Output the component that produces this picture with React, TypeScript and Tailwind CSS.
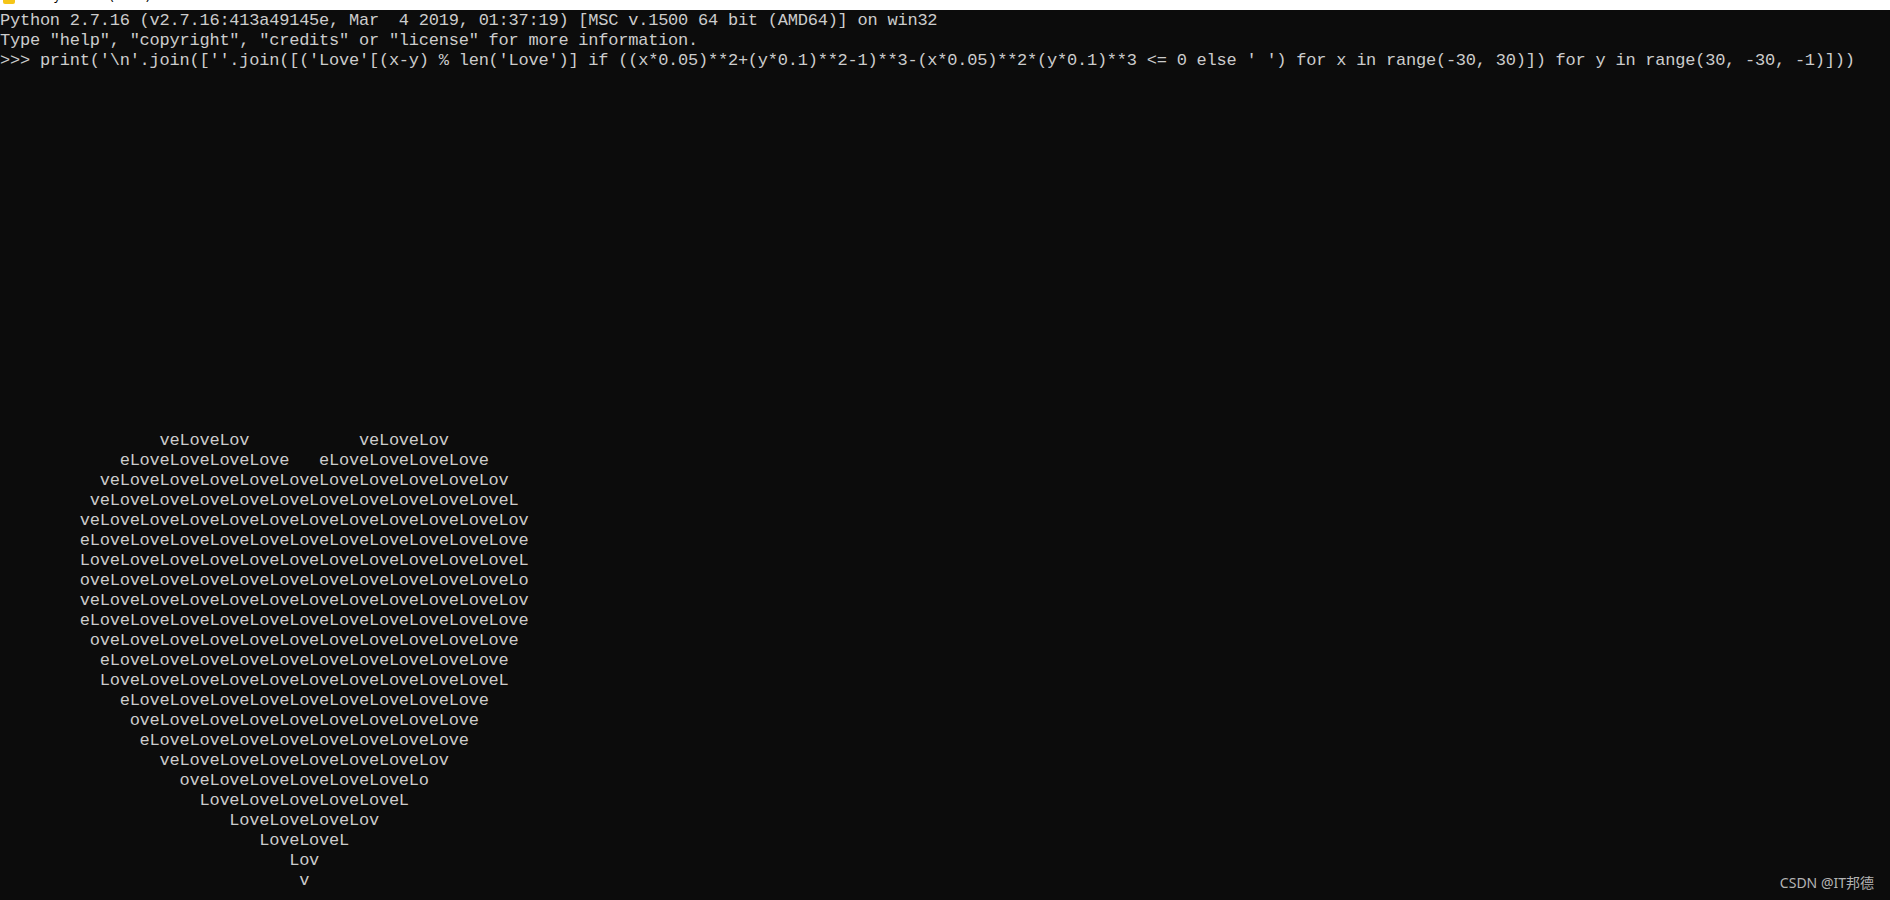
const header = [
  "Python 2.7.16 (v2.7.16:413a49145e, Mar  4 2019, 01:37:19) [MSC v.1500 64 bit (AMD64)] on win32",
  'Type "help", "copyright", "credits" or "license" for more information.',
  ">>> print('\\n'.join([''.join([('Love'[(x-y) % len('Love')] if ((x*0.05)**2+(y*0.1)**2-1)**3-(x*0.05)**2*(y*0.1)**3 <= 0 else ' ') for x in range(-30, 30)]) for y in range(30, -30, -1)]))",
];

// same loop as the python one-liner
function heartLines() {
  const word = "Love";
  const out: string[] = [];
  for (let y = 30; y > -30; y--) {
    let row = "";
    for (let x = -30; x < 30; x++) {
      const a = x * 0.05;
      const b = y * 0.1;
      const v = Math.pow(a * a + b * b - 1, 3) - a * a * Math.pow(b, 3);
      row += v <= 0 ? word[(((x - y) % 4) + 4) % 4] : " ";
    }
    out.push(row);
  }
  return out;
}

export default function App() {
  const lines = [...header, ...heartLines()];

  return (
    <div className="relative h-[900px] w-[1890px] overflow-hidden bg-[#0c0c0c]">
      <div className="h-[10px] overflow-hidden bg-white">
        <div className="mt-[-11px] flex h-[18px] items-end gap-2 pl-[3px] font-['Noto_Sans'] text-[12px] leading-[14px] text-black">
          <span className="mb-[3px] h-[12px] w-[12px] rounded-[2px] bg-[#f5c518]" />
          <span className="mb-[4px] pl-6">Python 2.7 (64-bit)</span>
        </div>
      </div>

      <div className="pt-[1px] font-['Liberation_Mono',monospace] text-[17px] leading-[20px] tracking-[-0.23px] text-[#cccccc]">
        {lines.map((line, i) => (
          <div key={i} className="h-[20px] whitespace-pre">
            {line}
          </div>
        ))}
      </div>

      <div className="absolute bottom-[7px] right-[16px] font-['Noto_Sans','Noto_Sans_CJK_SC',sans-serif] text-[14px] text-[#b4b4b4]">
        CSDN @IT邦德
      </div>
    </div>
  );
}
